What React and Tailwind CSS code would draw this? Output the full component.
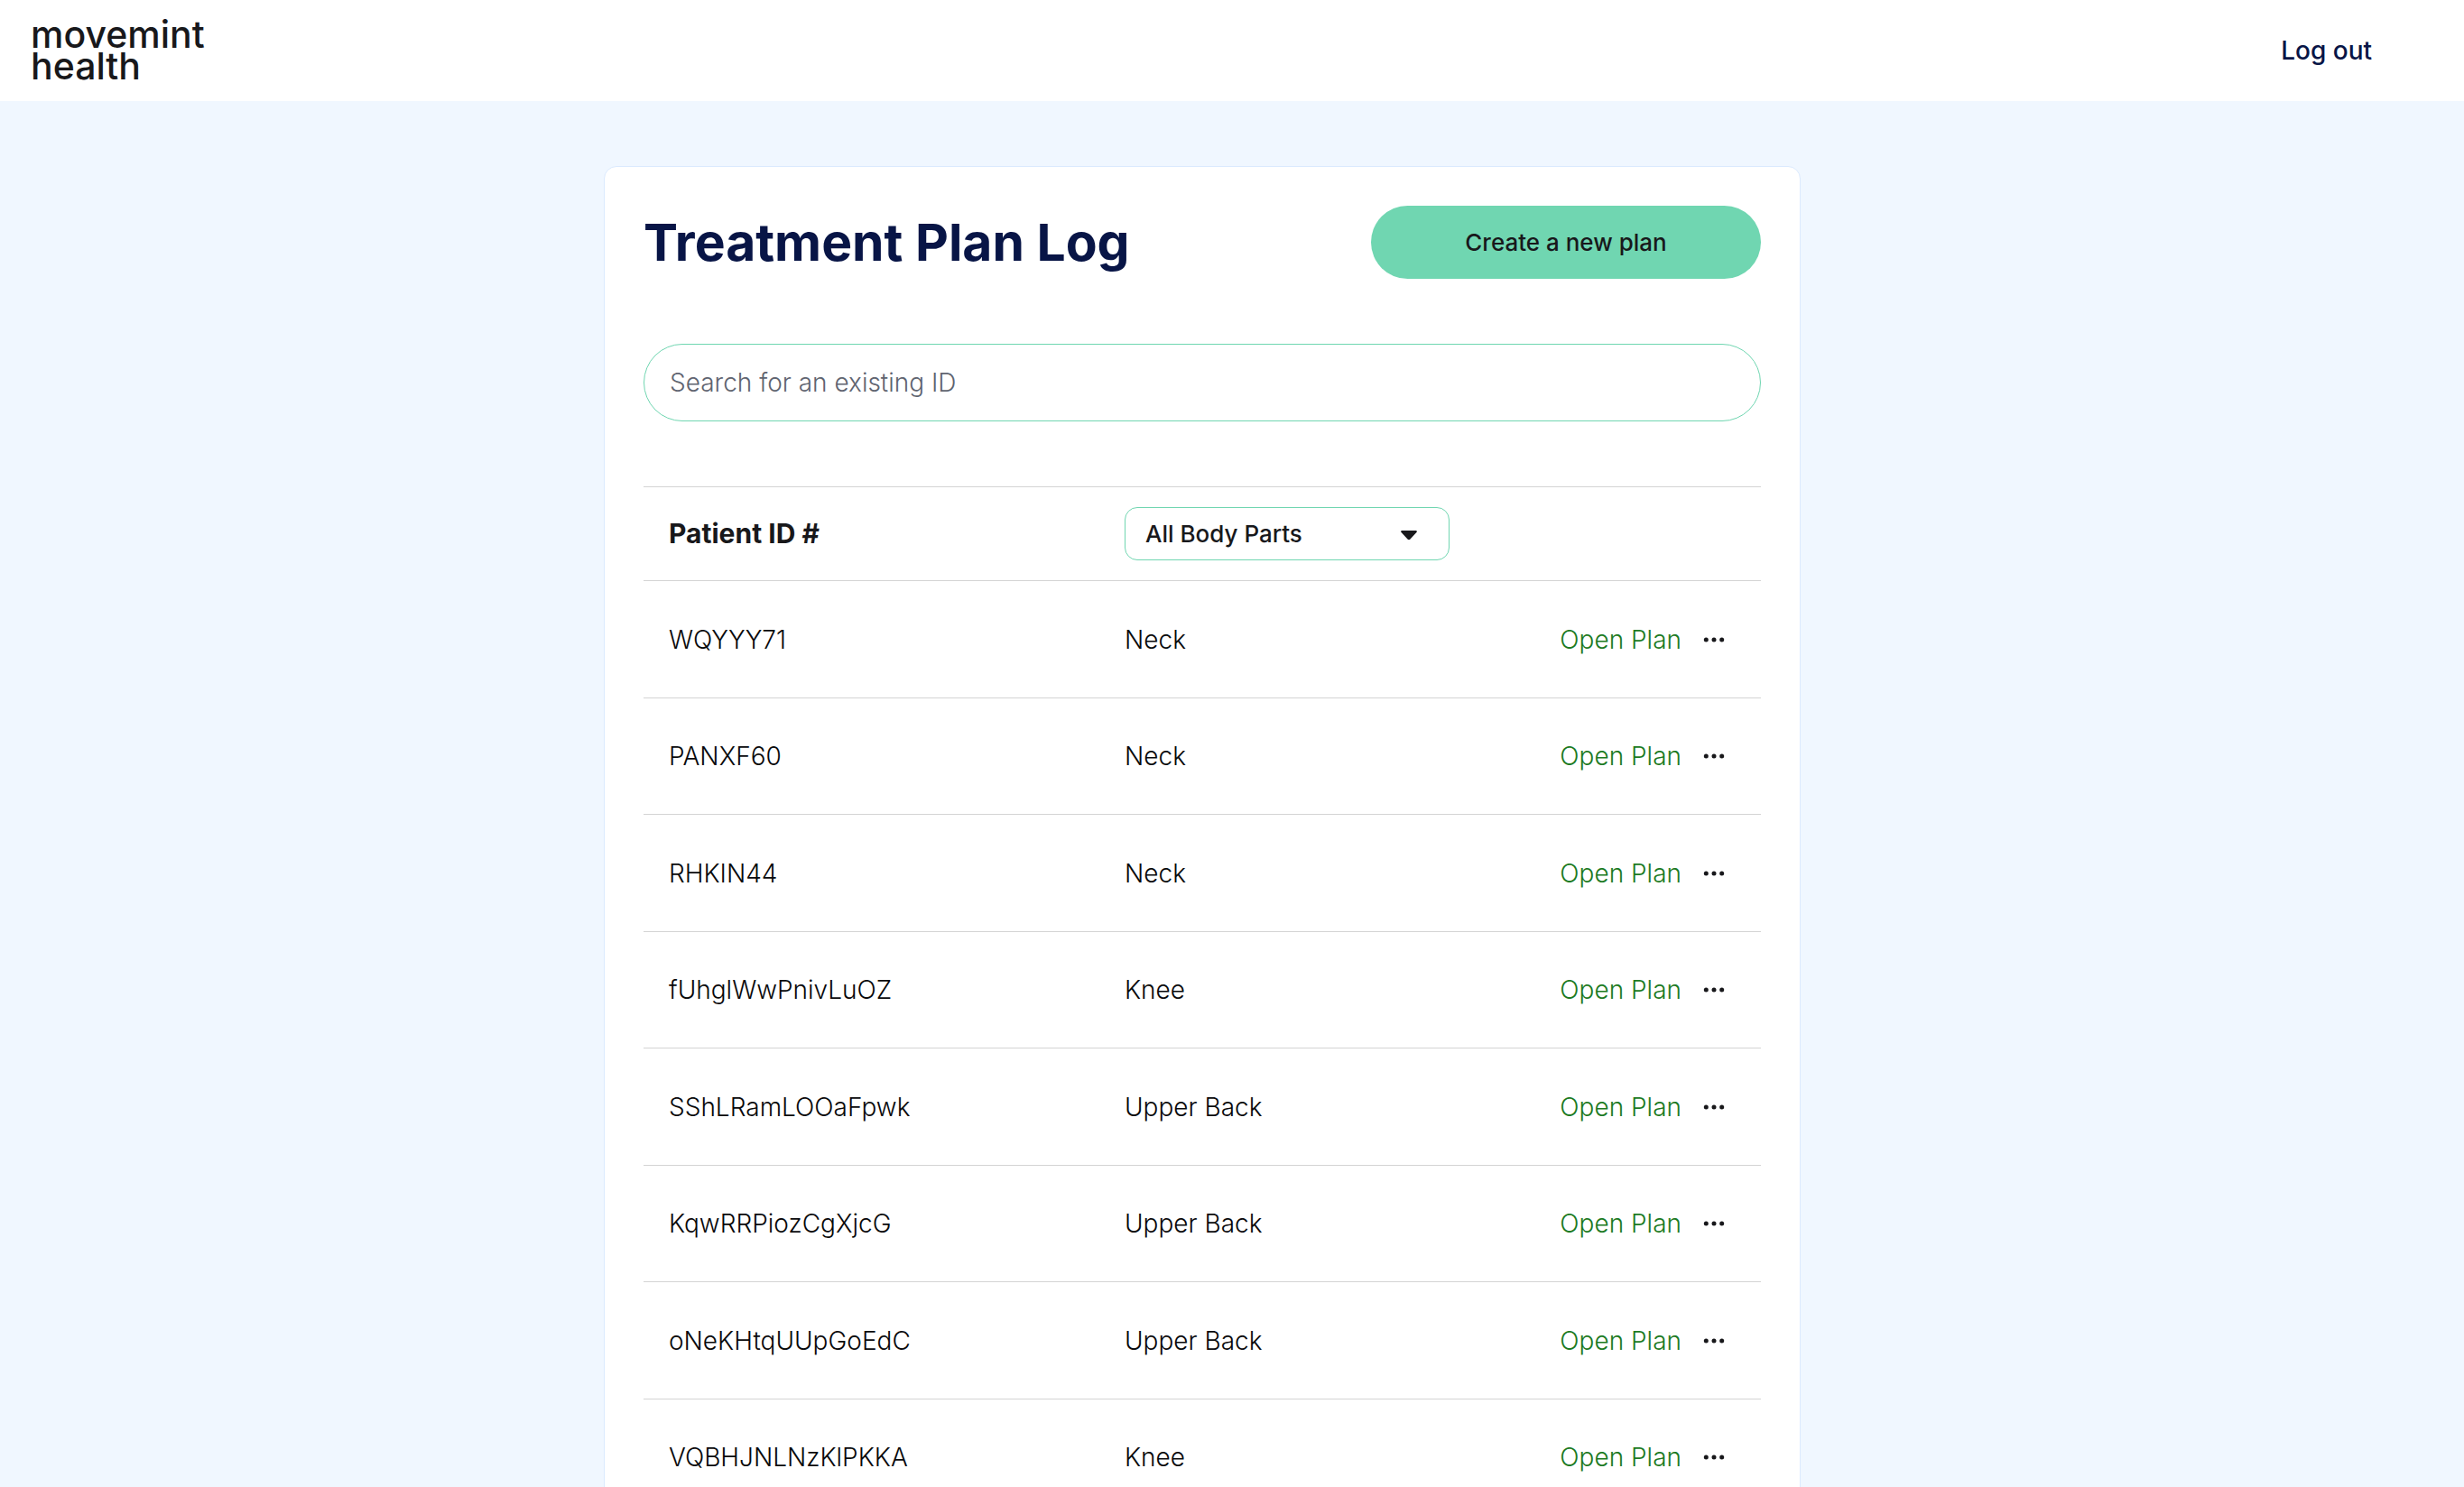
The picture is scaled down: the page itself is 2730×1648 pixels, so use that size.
const plans = [
  { id: "WQYYY71", bodyPart: "Neck" },
  { id: "PANXF60", bodyPart: "Neck" },
  { id: "RHKIN44", bodyPart: "Neck" },
  { id: "fUhglWwPnivLuOZ", bodyPart: "Knee" },
  { id: "SShLRamLOOaFpwk", bodyPart: "Upper Back" },
  { id: "KqwRRPiozCgXjcG", bodyPart: "Upper Back" },
  { id: "oNeKHtqUUpGoEdC", bodyPart: "Upper Back" },
  { id: "VQBHJNLNzKlPKKA", bodyPart: "Knee" },
];

function Header() {
  return (
    <header className="flex h-28 items-center justify-between bg-white pl-[34px] pr-[102px]">
      <a href="#home" className="text-[41px] font-medium leading-[35px] text-[#18181b]">
        movemint
        <br />
        health
      </a>
      <button type="button" className="text-[28px] font-medium text-[#081546]">
        Log out
      </button>
    </header>
  );
}

function BodyPartFilter() {
  return (
    <div className="relative w-[360px]">
      <select
        aria-label="Filter by body part"
        className="h-[59px] w-full appearance-none rounded-[14px] border border-[#70d6b1] bg-white pl-[22px] text-[26px] font-medium text-[#18181b]"
      >
        <option>All Body Parts</option>
        <option>Neck</option>
        <option>Knee</option>
        <option>Upper Back</option>
      </select>
      <svg
        className="pointer-events-none absolute right-9 top-[25px] h-[12px] w-[18px]"
        viewBox="0 0 18 12"
        fill="#18181b"
        aria-hidden="true"
      >
        <path d="M1.6 1h14.8c1.4 0 1.9 1.2 1 2.1l-6.9 7.5c-.9.9-2.1.9-3 0L.6 3.1C-.3 2.2.2 1 1.6 1z" />
      </svg>
    </div>
  );
}

function PlanRow({ plan }) {
  return (
    <tr className="h-[129px] border-b border-[#d4d4d4] odd:h-[130px]">
      <td className="pl-7">{plan.id}</td>
      <td className="pl-7">{plan.bodyPart}</td>
      <td className="pr-7">
        <div className="flex items-center justify-end gap-3">
          <a href={`#${plan.id}`} className="text-[#1b7a22]">
            Open Plan
          </a>
          <button
            type="button"
            aria-label={`More options for ${plan.id}`}
            className="flex h-12 w-12 items-center justify-center"
          >
            <svg className="h-[6px] w-[24px]" viewBox="0 0 24 6" fill="#18181b" aria-hidden="true">
              <circle cx="3.3" cy="3" r="2.5" />
              <circle cx="12" cy="3" r="2.5" />
              <circle cx="20.7" cy="3" r="2.5" />
            </svg>
          </button>
        </div>
      </td>
    </tr>
  );
}

export default function App() {
  return (
    <div className="h-screen overflow-hidden bg-[#f0f7ff] font-['Inter',sans-serif]">
      <Header />
      <main className="mt-[72px] flex justify-center pr-[66px]">
        <section className="w-full max-w-[1326px] rounded-[14px] border border-[#dbeafe] bg-white p-[43px]">
          <div className="flex items-center justify-between">
            <h1 className="text-[57px] font-bold leading-[81px] text-[#081546]">Treatment Plan Log</h1>
            <button
              type="button"
              className="h-[81px] w-[432px] rounded-full bg-[#70d6b1] text-[26px] font-medium text-[#18181b]"
            >
              Create a new plan
            </button>
          </div>

          <input
            type="search"
            aria-label="Search for an existing ID"
            placeholder="Search for an existing ID"
            className="mt-[72px] block h-[86px] w-full rounded-full border border-[#70d6b1] bg-white px-7 text-[28px] font-light placeholder:text-[#5f6470]"
          />

          <table className="mt-[72px] w-full table-fixed border-collapse text-left text-[28px] font-light text-[#09090b]">
            <thead>
              <tr className="h-[104px] border-y border-[#d4d4d4]">
                <th scope="col" className="w-[505px] pl-7 text-[30px] font-bold text-[#18181b]">
                  Patient ID #
                </th>
                <th scope="col" className="w-[388px] pl-7">
                  <BodyPartFilter />
                </th>
                <td />
              </tr>
            </thead>
            <tbody>
              {plans.map((plan) => (
                <PlanRow key={plan.id} plan={plan} />
              ))}
            </tbody>
          </table>
        </section>
      </main>
    </div>
  );
}
